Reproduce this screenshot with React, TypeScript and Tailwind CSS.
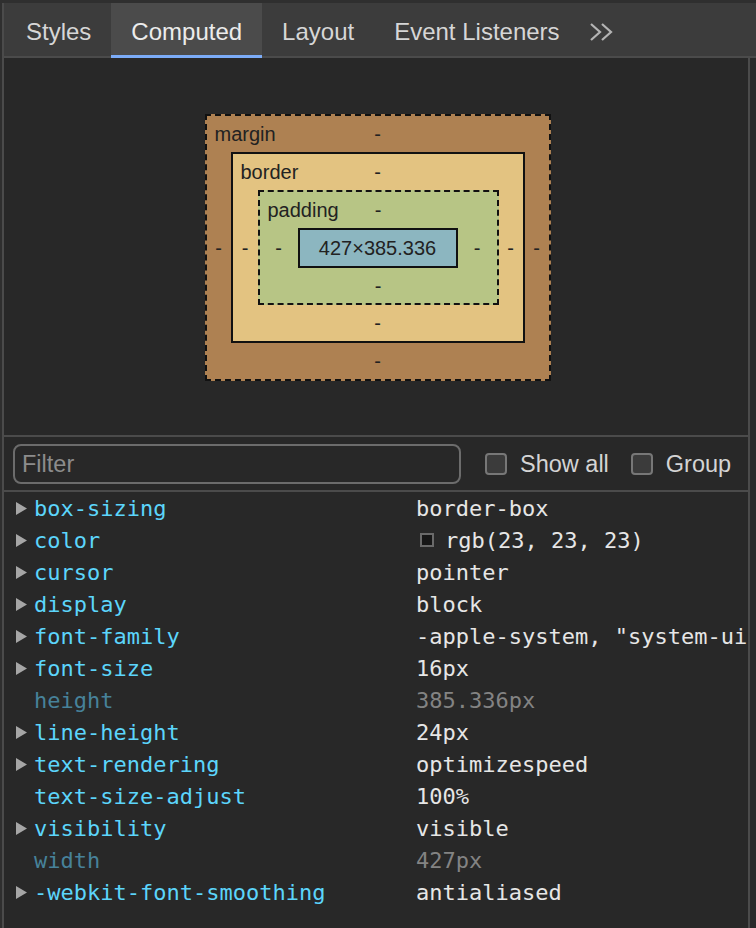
import React from "react";

const rows: { name: string; value: React.ReactNode; dim?: boolean; arrow: boolean }[] = [
  { name: "box-sizing", value: "border-box", arrow: true },
  { name: "color", value: "rgb", arrow: true },
  { name: "cursor", value: "pointer", arrow: true },
  { name: "display", value: "block", arrow: true },
  { name: "font-family", value: '-apple-system, "system-ui", Roboto, sans-serif', arrow: true },
  { name: "font-size", value: "16px", arrow: true },
  { name: "height", value: "385.336px", arrow: false, dim: true },
  { name: "line-height", value: "24px", arrow: true },
  { name: "text-rendering", value: "optimizespeed", arrow: true },
  { name: "text-size-adjust", value: "100%", arrow: false },
  { name: "visibility", value: "visible", arrow: true },
  { name: "width", value: "427px", arrow: false, dim: true },
  { name: "-webkit-font-smoothing", value: "antialiased", arrow: true },
];

const sans = { fontFamily: '"Liberation Sans", Arial, sans-serif' };
const mono = { fontFamily: '"DejaVu Sans Mono", Menlo, monospace' };

function Tri() {
  return (
    <svg width="11" height="13" viewBox="0 0 11 13" className="shrink-0">
      <polygon points="0,0 11,6.5 0,13" fill="#a6a6a6" />
    </svg>
  );
}

export default function App() {
  return (
    <div className="w-[756px] h-[928px] bg-[#2f2f2f] pt-[3px] pl-[2px] overflow-hidden" style={sans}>
      <div className="h-full border-l-2 border-[#4b4b4b] flex flex-col">
        {/* tab bar */}
        <div className="h-[55px] shrink-0 bg-[#3c3c3c] border-b-2 border-[#4b4b4b] flex items-stretch pl-[2px] text-[24px] text-[#d6d6d6]">
          <div className="px-5 pt-1 flex items-center">Styles</div>
          <div className="relative px-5 pt-1 flex items-center bg-[#4b4b4b] text-[#ececec]">
            Computed
            <div className="absolute left-0 right-0 -bottom-[2px] h-[3px] bg-[#7cacf8]" />
          </div>
          <div className="px-5 pt-1 flex items-center">Layout</div>
          <div className="px-5 pt-1 flex items-center">Event Listeners</div>
          <div className="pl-[9px] pt-1 flex items-center">
            <svg width="26" height="20" viewBox="0 0 26 20">
              <polyline points="2,2 11,10 2,18" fill="none" stroke="#b4b4b4" strokeWidth="2.2" />
              <polyline points="13,2 22,10 13,18" fill="none" stroke="#b4b4b4" strokeWidth="2.2" />
            </svg>
          </div>
        </div>

        {/* content */}
        <div className="flex-1 flex min-h-0">
          <div className="w-[746px] bg-[#282828] border-r-2 border-[#4b4b4b] flex flex-col overflow-hidden">
            {/* box model */}
            <div className="h-[377px] shrink-0 flex items-center justify-center pl-[3px] pt-[2px]">
              <div className="w-[346px] h-[267px] border-2 border-dashed border-[#111] bg-[#ae8152] flex flex-col text-[20px] text-[#222]">
                <div className="h-[36px] grid grid-cols-[1fr_auto_1fr] items-center">
                  <span className="pl-[8px]">margin</span>
                  <span>-</span>
                  <span />
                </div>
                <div className="flex-1 flex items-center">
                  <div className="w-[24px] text-center">-</div>
                  <div className="w-[294px] h-[191px] border-2 border-[#111] bg-[#e3c381] flex flex-col">
                    <div className="h-[36px] grid grid-cols-[1fr_auto_1fr] items-center">
                      <span className="pl-[8px]">border</span>
                      <span>-</span>
                      <span />
                    </div>
                    <div className="flex-1 flex items-center">
                      <div className="w-[25px] text-center">-</div>
                      <div className="w-[241px] h-[115px] border-2 border-dashed border-[#111] bg-[#b7c585] flex flex-col">
                        <div className="h-[36px] grid grid-cols-[1fr_auto_1fr] items-center">
                          <span className="pl-[8px]">padding</span>
                          <span>-</span>
                          <span />
                        </div>
                        <div className="flex-1 flex items-center">
                          <div className="w-[38px] text-center">-</div>
                          <div className="w-[160px] h-[40px] border-2 border-[#111] bg-[#8cb6c0] flex items-center justify-center">
                            427×385.336
                          </div>
                          <div className="flex-1 text-center">-</div>
                        </div>
                        <div className="h-[35px] flex items-center justify-center">-</div>
                      </div>
                      <div className="flex-1 text-center">-</div>
                    </div>
                    <div className="h-[36px] flex items-center justify-center">-</div>
                  </div>
                  <div className="flex-1 text-center">-</div>
                </div>
                <div className="h-[36px] flex items-center justify-center">-</div>
              </div>
            </div>

            {/* filter row */}
            <div className="h-[57px] shrink-0 border-y-2 border-[#4b4b4b] flex items-center pl-[9px] text-[23.5px] text-[#d4d4d4]">
              <div className="w-[448px] h-[40px] border-2 border-[#6c6c6c] rounded-[8px] flex items-center pl-[7px] pt-[2px] text-[#8c8c8c]">
                Filter
              </div>
              <div className="ml-[24px] w-[22px] h-[22px] rounded-[4px] border-2 border-[#777] bg-[#3b3b3b]" />
              <span className="ml-[13px] pt-[2px]">Show all</span>
              <div className="ml-[22px] w-[22px] h-[22px] rounded-[4px] border-2 border-[#777] bg-[#3b3b3b]" />
              <span className="ml-[13px] pt-[2px]">Group</span>
            </div>

            {/* properties */}
            <div className="flex flex-col text-[22px]" style={mono}>
              {rows.map((r) => (
                <div key={r.name} className="h-[32px] flex items-center whitespace-nowrap">
                  <div className="w-[412px] shrink-0 flex items-center pl-[12px]">
                    <div className="w-[18px] shrink-0 flex items-center">{r.arrow ? <Tri /> : null}</div>
                    <span className={r.dim ? "text-[#47829a]" : "text-[#5cd5fb]"}>{r.name}</span>
                  </div>
                  {r.name === "color" ? (
                    <div className="flex items-center text-[#e6e6e6]">
                      <div className="ml-[4px] w-[14px] h-[14px] border-2 border-[#6a6a6a] bg-[#171717] mr-[11px]" />
                      <span>rgb(23, 23, 23)</span>
                    </div>
                  ) : (
                    <span className={r.dim ? "text-[#838383]" : "text-[#e6e6e6]"}>{r.value}</span>
                  )}
                </div>
              ))}
            </div>
          </div>
          <div className="flex-1 bg-[#2a2a2a]" />
        </div>
      </div>
    </div>
  );
}
